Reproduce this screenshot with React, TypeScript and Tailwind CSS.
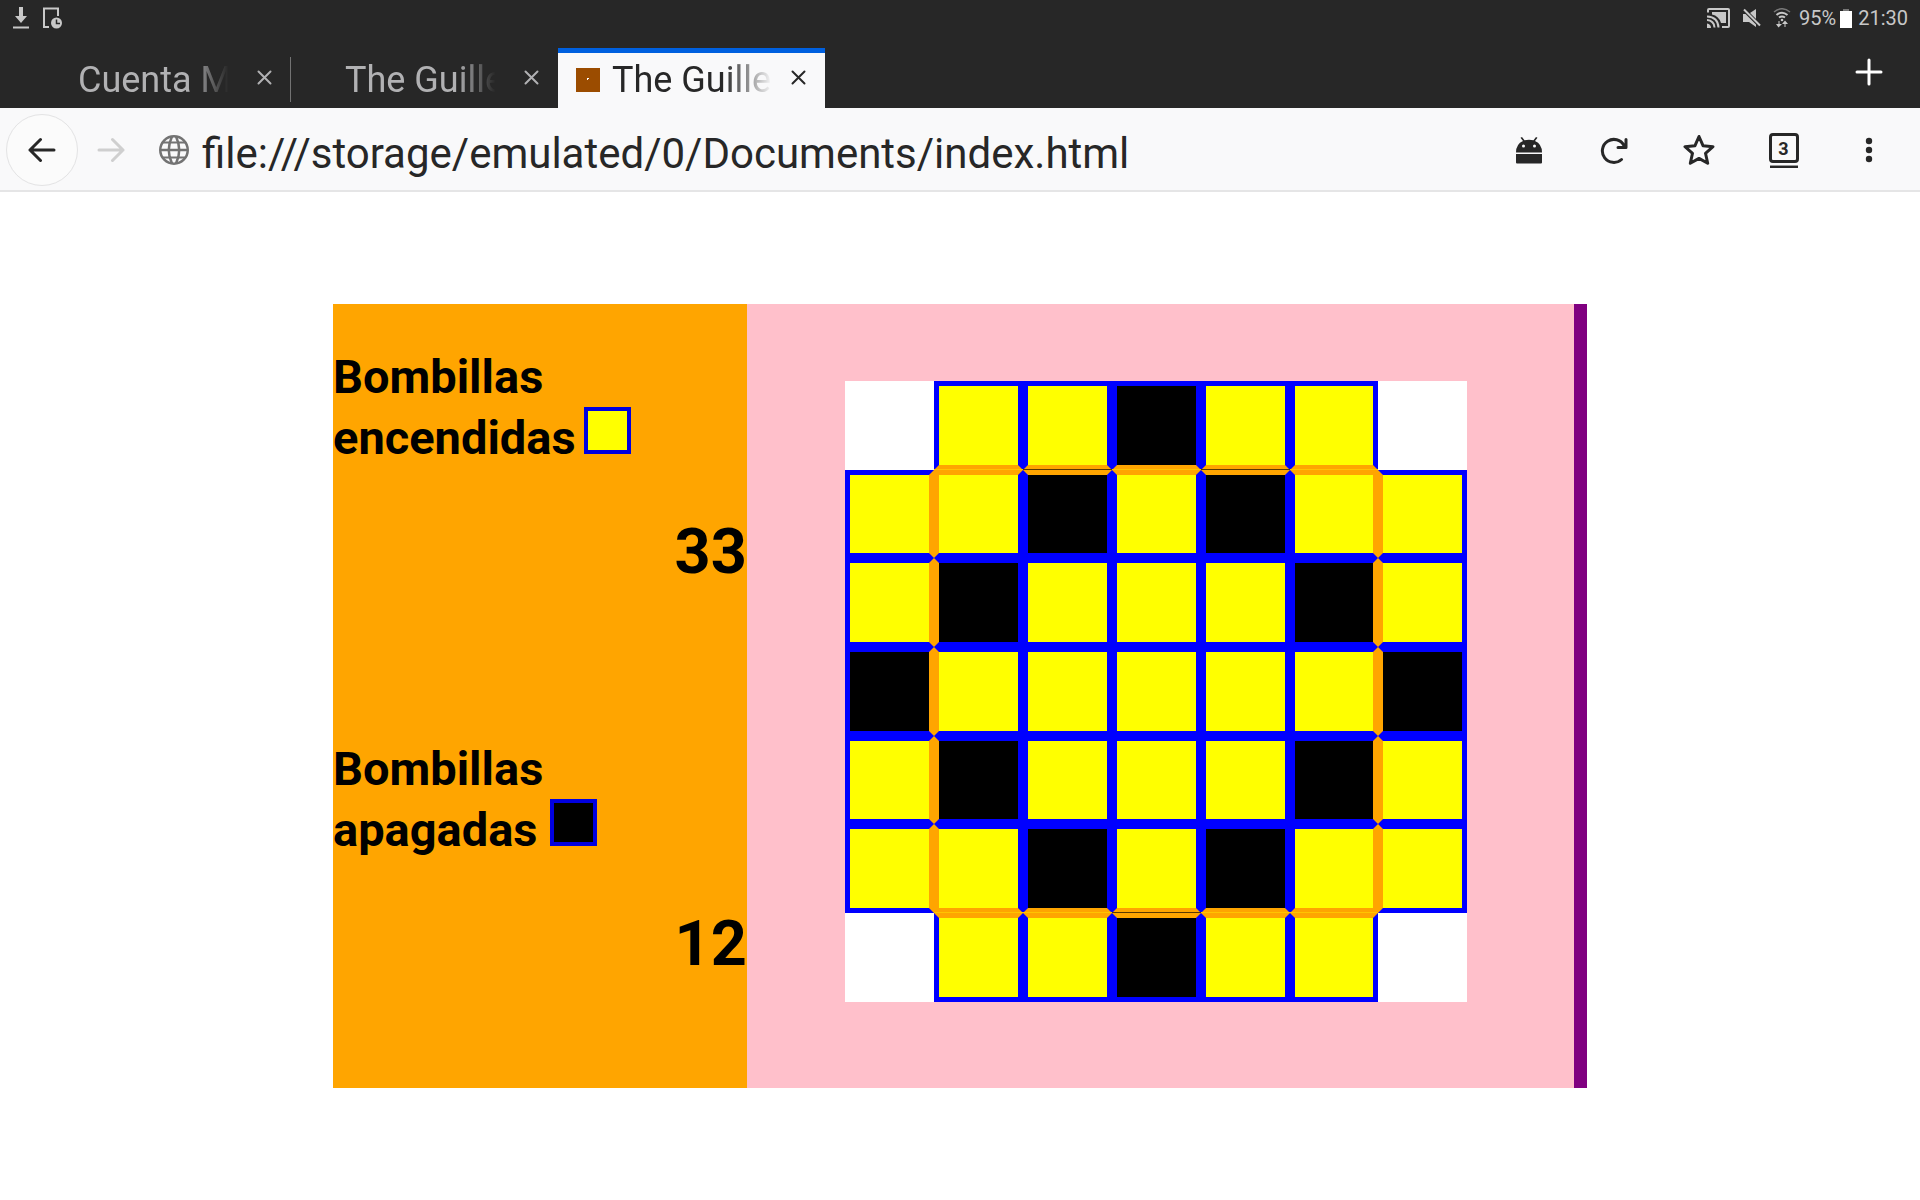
import type { ReactNode } from 'react';

const BOARD = [
  ' YYKYY ',
  'YYKYKYY',
  'YKYYYKY',
  'KYYYYYK',
  'YKYYYKY',
  'YYKYKYY',
  ' YYKYY ',
];

function cellClass(row: number, col: number) {
  const value = BOARD[row][col];
  if (value === ' ') return 'bg-white';
  const classes = ['border-5 border-[#0000ff]', value === 'Y' ? 'bg-[#ffff00]' : 'bg-black'];
  const innerCol = col >= 1 && col <= 5;
  const innerRow = row >= 1 && row <= 5;
  if (innerCol && (row === 0 || row === 5)) classes.push('border-b-[#ffa500]');
  if (innerCol && (row === 1 || row === 6)) {
    classes.push('border-t-[#ffa500]');
    classes.push(value === 'Y' ? 'shadow-[0_-1px_0_#ffc400]' : 'shadow-[0_-1px_0_#5a3a00]');
  }
  if (innerRow && (col === 0 || col === 5)) classes.push('border-r-[#ffa500]');
  if (innerRow && (col === 1 || col === 6)) classes.push('border-l-[#ffa500]');
  return classes.join(' ');
}

function StatusBar() {
  return (
    <div className="flex h-12 items-start justify-between px-3 pt-1 text-[#c8c8c8]">
      <div className="flex h-7 items-center gap-3">
        <svg width="18" height="22" viewBox="0 0 18 22" fill="currentColor">
          <path d="M7 0h4v9h4l-6 7-6-7h4zM1 19.500h16v2H1z" />
        </svg>
        <svg width="21" height="22" viewBox="0 0 21 22">
          <path d="M7 20H2V1.500h14V9" fill="none" stroke="currentColor" strokeWidth="2" />
          <circle cx="14.500" cy="16" r="5.500" fill="currentColor" />
          <path d="M14.500 12.500v4h3.500" fill="none" stroke="#272727" strokeWidth="1.500" />
        </svg>
      </div>
      <div className="flex h-7 items-center text-xl">
        <svg className="mr-3" width="23" height="20" viewBox="0 0 23 20" fill="none" stroke="currentColor">
          <path d="M1 4.500V2Q1 1 2 1h19q1 0 1 1v16q0 1-1 1h-6" strokeWidth="2" />
          <path d="M5 4h14v11h-5Q12 8 5 6.500z" fill="currentColor" stroke="none" />
          <path d="M0 8.500Q11 9 11.500 19.500M0 12Q7 12.500 7.500 19.500" strokeWidth="2" />
          <path d="M0 15.500Q4 16 4 20H0z" fill="currentColor" stroke="none" />
        </svg>
        <svg className="mr-3" width="19" height="20" viewBox="0 0 19 20" fill="currentColor">
          <path d="M1 6h4l9 9.500V19l-7-5H1zM8 5l6-4v10z" />
          <path d="M1 1l17 17" stroke="#272727" strokeWidth="3.500" />
          <path d="M2 1.500l16 16" stroke="currentColor" strokeWidth="2" />
        </svg>
        <svg className="mr-2" width="18" height="20" viewBox="0 0 18 20" fill="none" stroke="currentColor">
          <path d="M1 4Q9-2.500 17 4" strokeWidth="1.500" opacity=".5" />
          <path d="M3.500 7Q9 2.500 14.500 7M6 9.500Q9 7.500 12 9.500" strokeWidth="2" />
          <circle cx="9" cy="12" r="1.300" fill="currentColor" stroke="none" />
          <path d="M6.500 13v3H9l-3.500 3.500L3 16h2.500v-3zM11.500 19v-3H9l3-3.500 3 3.500h-2.500v3z" fill="currentColor" stroke="none" />
        </svg>
        <span>95%</span>
        <svg className="mr-1.5 ml-1" width="12" height="19" viewBox="0 0 12 19">
          <path d="M3 0h6v2H3z" fill="#777" />
          <path d="M0 2h12v17H0z" fill="#fff" />
        </svg>
        <span>21:30</span>
      </div>
    </div>
  );
}

function Tab({ title, active, divider }: { title: string; active?: boolean; divider?: boolean }) {
  return (
    <div
      className={`relative flex h-[60px] w-[267px] items-center border-t-5 pb-0.5 pl-[18px] ${
        active ? 'border-[#0060df] bg-[#f9f9fa] text-[#272727]' : 'border-transparent text-[#b1b1b3]'
      }`}
    >
      <span className="flex size-6 shrink-0 items-center justify-center">
        {active && (
          <svg width="24" height="24" viewBox="0 0 24 24">
            <path d="M0 0h24v24H0z" fill="#9b4c00" />
            <path d="M11 10h2v1h-1v1h-1z" fill="#fff" />
          </svg>
        )}
      </span>
      <button
        type="button"
        className={`ml-3 w-[160px] shrink-0 text-left text-4xl whitespace-nowrap ${
          active
            ? '[mask-image:linear-gradient(to_right,black_70%,transparent_100%)]'
            : '[mask-image:linear-gradient(to_right,black_70%,transparent_94%)]'
        }`}
      >
        {title}
      </button>
      <button type="button" aria-label="Cerrar pestaña" className="ml-3 flex h-10 w-7 items-center justify-center pb-1">
        <svg width="15" height="15" viewBox="0 0 15 15" fill="none" stroke="currentColor" strokeWidth="2" strokeLinecap="round">
          <path d="M1.500 1.500l12 12M13.500 1.500l-12 12" />
        </svg>
      </button>
      {divider && <span className="absolute top-1 right-0 h-[45px] w-px bg-[#737373]" />}
    </div>
  );
}

function ToolButton({ label, children }: { label: string; children: ReactNode }) {
  return (
    <button type="button" aria-label={label} className="flex h-[72px] w-[85px] items-center justify-center">
      {children}
    </button>
  );
}

function Toolbar() {
  return (
    <div className="flex h-[84px] items-start border-b-2 border-[#e5e5e6] bg-[#f9f9fa] pt-1.5 pr-[9px] pl-1.5 text-[#272727]">
      <button
        type="button"
        aria-label="Atrás"
        className="flex size-[72px] shrink-0 items-center justify-center rounded-full border border-[#e3e3e4] bg-[#fbfbfb]"
      >
        <svg width="28" height="26" viewBox="0 0 28 26" fill="none" stroke="currentColor" strokeWidth="3" strokeLinecap="round" strokeLinejoin="round">
          <path d="M26 13H2M12.500 2.500L2 13l10.500 10.500" />
        </svg>
      </button>
      <button type="button" aria-label="Adelante" className="ml-2 flex h-[72px] w-[50px] shrink-0 items-center justify-center text-[#cfcfcf]">
        <svg width="28" height="26" viewBox="0 0 28 26" fill="none" stroke="currentColor" strokeWidth="3" strokeLinecap="round" strokeLinejoin="round">
          <path d="M2 13h24M15.500 2.500L26 13 15.500 23.500" />
        </svg>
      </button>
      <div className="ml-[22px] flex h-[72px] shrink-0 items-center">
        <svg width="32" height="32" viewBox="0 0 32 32" fill="none" stroke="#737373" strokeWidth="2.500">
          <circle cx="16" cy="16" r="13.750" />
          <path d="M2 16h28M14 2.500Q7.500 16 14 29.500M18 2.500Q24.500 16 18 29.500" />
          <path d="M5 8.500h22M5 23.500h22" strokeWidth="2" />
        </svg>
      </div>
      <input
        type="text"
        aria-label="Dirección"
        defaultValue="file:///storage/emulated/0/Documents/index.html"
        className="ml-3 h-[78px] min-w-0 flex-1 bg-transparent text-[42px] outline-none"
      />
      <ToolButton label="Aplicaciones Android">
        <svg width="26" height="27" viewBox="0 0 26 27" fill="currentColor">
          <path d="M0 15.500Q0 7 7 4L4.500.8 6 0l2.500 3.300Q13 2 17.500 3.300L20 0l1.500.8L19 4q7 3 7 11.500zM0 17h26v8.500q0 1-1 1H1q-1 0-1-1z" />
          <circle cx="7.500" cy="9" r="1.500" fill="#f9f9fa" />
          <circle cx="18.500" cy="9" r="1.500" fill="#f9f9fa" />
        </svg>
      </ToolButton>
      <ToolButton label="Recargar">
        <svg width="28" height="28" viewBox="0 0 28 28" fill="none" stroke="currentColor" strokeWidth="3" strokeLinecap="round" strokeLinejoin="round">
          <path d="M21.500 23.500A11.500 11.500 0 1 1 24 9.500M26 3.500V11.500H18" />
        </svg>
      </ToolButton>
      <ToolButton label="Añadir a marcadores">
        <svg width="32" height="32" viewBox="0 0 32 32" fill="none" stroke="currentColor" strokeWidth="3" strokeLinejoin="round">
          <path d="M16 2.500l4 9.200 10 1-7.500 6.600 2.200 10L16 24.400l-8.700 4.900 2.200-10L2 12.700l10-1z" />
        </svg>
      </ToolButton>
      <ToolButton label="Pestañas abiertas">
        <span className="flex flex-col items-center gap-0.5">
          <span className="flex size-[30px] items-center justify-center rounded-sm border-3 border-current pt-0.5 text-lg leading-none font-bold">3</span>
          <span className="h-[3px] w-7 border-t border-b-2 border-t-[#999] border-b-current" />
        </span>
      </ToolButton>
      <ToolButton label="Menú">
        <svg width="8" height="26" viewBox="0 0 8 26" fill="currentColor">
          <circle cx="4" cy="4" r="3.200" />
          <circle cx="4" cy="13" r="3.200" />
          <circle cx="4" cy="22" r="3.200" />
        </svg>
      </ToolButton>
    </div>
  );
}

function Counter({ word, count, on }: { word: string; count: number; on?: boolean }) {
  return (
    <section className="flex-1 basis-0 pt-[42px] font-bold">
      <h2 className="text-[47px] leading-[61px]">
        Bombillas
        <br />
        {word}
        <span
          className={`inline-block size-[47px] border-4 border-[#0000e0] align-baseline ${
            on ? 'ml-2 bg-[#ffff00]' : 'ml-3 bg-black'
          }`}
        />
      </h2>
      <p className="mt-[42px] text-right text-[63px] leading-[84px]">{count}</p>
    </section>
  );
}

export default function App() {
  return (
    <div className="min-h-screen bg-white font-[Roboto,sans-serif]">
      <header>
        <div className="bg-[#272727]">
          <StatusBar />
          <div className="flex justify-between pr-[31px] pl-6">
            <div className="flex">
              <Tab title="Cuenta M" divider />
              <Tab title="The Guille" />
              <Tab title="The Guille" active />
            </div>
            <button type="button" aria-label="Nueva pestaña" className="flex h-12 w-10 items-center justify-center text-white">
              <svg width="28" height="28" viewBox="0 0 28 28" fill="none" stroke="currentColor" strokeWidth="3" strokeLinecap="round">
                <path d="M14 2v24M2 14h24" />
              </svg>
            </button>
          </div>
        </div>
        <Toolbar />
      </header>
      <main className="mx-[333px] mt-28 flex bg-[#800080] text-black">
        <div className="flex w-[33%] flex-col bg-[#ffa500]">
          <Counter word="encendidas" count={33} on />
          <Counter word="apagadas" count={12} />
        </div>
        <div className="w-[66%] bg-[#ffc0cb] pt-[77px] pr-[107px] pb-[86px] pl-[98px]">
          <div className="grid aspect-[623/621] grid-cols-7 grid-rows-7">
            {BOARD.map((line, row) =>
              line.split('').map((_, col) => <div key={`${row}-${col}`} className={cellClass(row, col)} />),
            )}
          </div>
        </div>
      </main>
    </div>
  );
}
